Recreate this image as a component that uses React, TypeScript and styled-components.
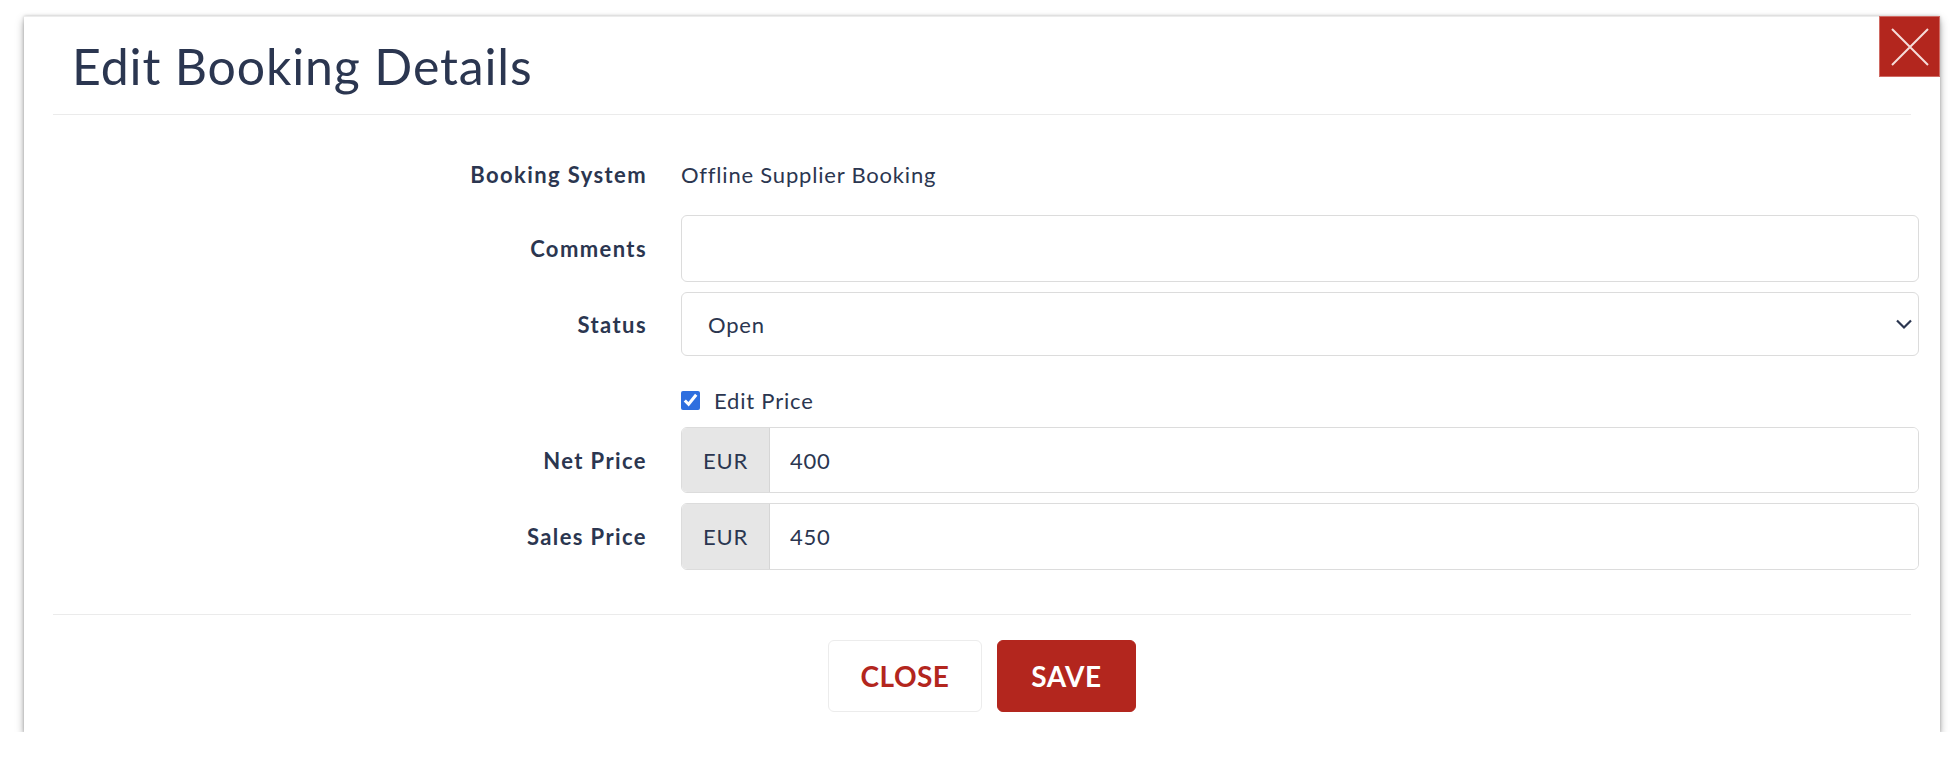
import styled, { createGlobalStyle } from "styled-components";

const GlobalStyle = createGlobalStyle`
  html, body {
    margin: 0;
    padding: 0;
    background: #ffffff;
  }
  body {
    font-family: "Lato", "Liberation Sans", sans-serif;
    color: #2b3650;
  }
  * {
    box-sizing: border-box;
  }
`;

const Page = styled.div`
  padding: 16px 20px 0 24px;
`;

const Modal = styled.div`
  position: relative;
  width: 1916px;
  background: #fff;
  border-top: 1px solid #ececec;
  box-shadow: 0 4px 8px rgba(0, 0, 0, 0.35), 0 0 3px rgba(0, 0, 0, 0.2);
`;

const Header = styled.div`
  height: 98px;
  margin: 0 29px;
  padding-left: 19px;
  display: flex;
  align-items: center;
  border-bottom: 1px solid #ebebeb;
`;

const Title = styled.h2`
  margin: 0;
  font-size: 50px;
  font-weight: 400;
  letter-spacing: 0.85px;
  color: #2b3650;
`;

const CloseIcon = styled.button`
  position: absolute;
  top: -1px;
  right: 0;
  width: 61px;
  height: 61px;
  padding: 0;
  border: 1px solid #d06a63;
  background: #b3261e;
  display: flex;
  align-items: center;
  justify-content: center;
  cursor: pointer;
`;

const Body = styled.div`
  padding: 39px 21px 44px 29px;
`;

const Row = styled.div<{ $mt: number; $h: number }>`
  display: grid;
  grid-template-columns: 594px 1fr;
  column-gap: 34px;
  align-items: center;
  margin-top: ${(p) => p.$mt}px;
  height: ${(p) => p.$h}px;
`;

const Label = styled.label`
  text-align: right;
  font-size: 22px;
  font-weight: 700;
  letter-spacing: 1.4px;
  color: #2b3650;
`;

const Value = styled.span`
  font-size: 22px;
  letter-spacing: 0.8px;
  color: #2b3650;
`;

const TextInput = styled.input`
  width: 100%;
  height: 100%;
  border: 1px solid #dcdcdc;
  border-radius: 6px;
  padding: 0 20px;
  font-family: inherit;
  font-size: 22px;
  letter-spacing: 0.8px;
  color: #2b3650;
  outline: none;
`;

const SelectWrap = styled.div`
  position: relative;
  height: 100%;
`;

const Select = styled.select`
  width: 100%;
  height: 100%;
  appearance: none;
  border: 1px solid #dcdcdc;
  border-radius: 6px;
  padding: 0 26px;
  background: #fff;
  font-family: inherit;
  font-size: 22px;
  letter-spacing: 0.8px;
  color: #2b3650;
  outline: none;
`;

const Chevron = styled.svg`
  position: absolute;
  right: 6px;
  top: 50%;
  transform: translateY(-50%);
  pointer-events: none;
`;

const CheckLabel = styled.label`
  display: flex;
  align-items: center;
  gap: 14px;
  font-size: 22px;
  letter-spacing: 0.8px;
  color: #2b3650;
`;

const Checkbox = styled.input`
  width: 19px;
  height: 19px;
  margin: 0;
  accent-color: #2f6fdf;
`;

const InputGroup = styled.div`
  display: flex;
  height: 100%;
  border: 1px solid #dcdcdc;
  border-radius: 6px;
  overflow: hidden;
`;

const Addon = styled.span`
  width: 88px;
  flex: none;
  display: flex;
  align-items: center;
  justify-content: center;
  background: #e6e6e6;
  border-right: 1px solid #d6d6d6;
  font-size: 22px;
  letter-spacing: 0.8px;
  color: #2b3650;
`;

const GroupInput = styled.input`
  flex: 1;
  border: none;
  padding: 0 20px;
  font-family: inherit;
  font-size: 22px;
  letter-spacing: 0.8px;
  color: #2b3650;
  outline: none;
`;

const Footer = styled.div`
  margin: 0 29px;
  padding: 25px 0 20px;
  border-top: 1px solid #ebebeb;
  display: flex;
  justify-content: center;
  gap: 15px;
`;

const Button = styled.button<{ $primary?: boolean; $w: number }>`
  width: ${(p) => p.$w}px;
  height: 72px;
  padding: 0;
  border-radius: 6px;
  border: 1px solid ${(p) => (p.$primary ? "#b3261e" : "#ececec")};
  background: ${(p) => (p.$primary ? "#b3261e" : "#fff")};
  color: ${(p) => (p.$primary ? "#fff" : "#b3261e")};
  font-family: inherit;
  font-size: 28px;
  font-weight: 700;
  letter-spacing: 0.5px;
  text-transform: uppercase;
  cursor: pointer;
`;

export default function App() {
  return (
    <Page>
      <GlobalStyle />
      <Modal>
        <Header>
          <Title>Edit Booking Details</Title>
        </Header>
        <CloseIcon aria-label="close">
          <svg width="40" height="40" viewBox="0 0 40 40">
            <path
              d="M2 2 L38 38 M38 2 L2 38"
              stroke="#f6dcda"
              strokeWidth="2"
              fill="none"
            />
          </svg>
        </CloseIcon>
        <Body>
          <Row $mt={0} $h={40}>
            <Label>Booking System</Label>
            <Value>Offline Supplier Booking</Value>
          </Row>
          <Row $mt={21} $h={67}>
            <Label>Comments</Label>
            <TextInput type="text" defaultValue="" />
          </Row>
          <Row $mt={10} $h={64}>
            <Label>Status</Label>
            <SelectWrap>
              <Select defaultValue="open">
                <option value="open">Open</option>
                <option value="closed">Closed</option>
              </Select>
              <Chevron width="18" height="12" viewBox="0 0 18 12">
                <path
                  d="M2 2.5 L9 9.5 L16 2.5"
                  stroke="#2b3650"
                  strokeWidth="2.2"
                  fill="none"
                />
              </Chevron>
            </SelectWrap>
          </Row>
          <Row $mt={30} $h={28}>
            <span />
            <CheckLabel>
              <Checkbox type="checkbox" defaultChecked />
              Edit Price
            </CheckLabel>
          </Row>
          <Row $mt={13} $h={66}>
            <Label>Net Price</Label>
            <InputGroup>
              <Addon>EUR</Addon>
              <GroupInput type="text" defaultValue="400" />
            </InputGroup>
          </Row>
          <Row $mt={10} $h={67}>
            <Label>Sales Price</Label>
            <InputGroup>
              <Addon>EUR</Addon>
              <GroupInput type="text" defaultValue="450" />
            </InputGroup>
          </Row>
        </Body>
        <Footer>
          <Button $w={154}>Close</Button>
          <Button $primary $w={139}>
            Save
          </Button>
        </Footer>
      </Modal>
    </Page>
  );
}
